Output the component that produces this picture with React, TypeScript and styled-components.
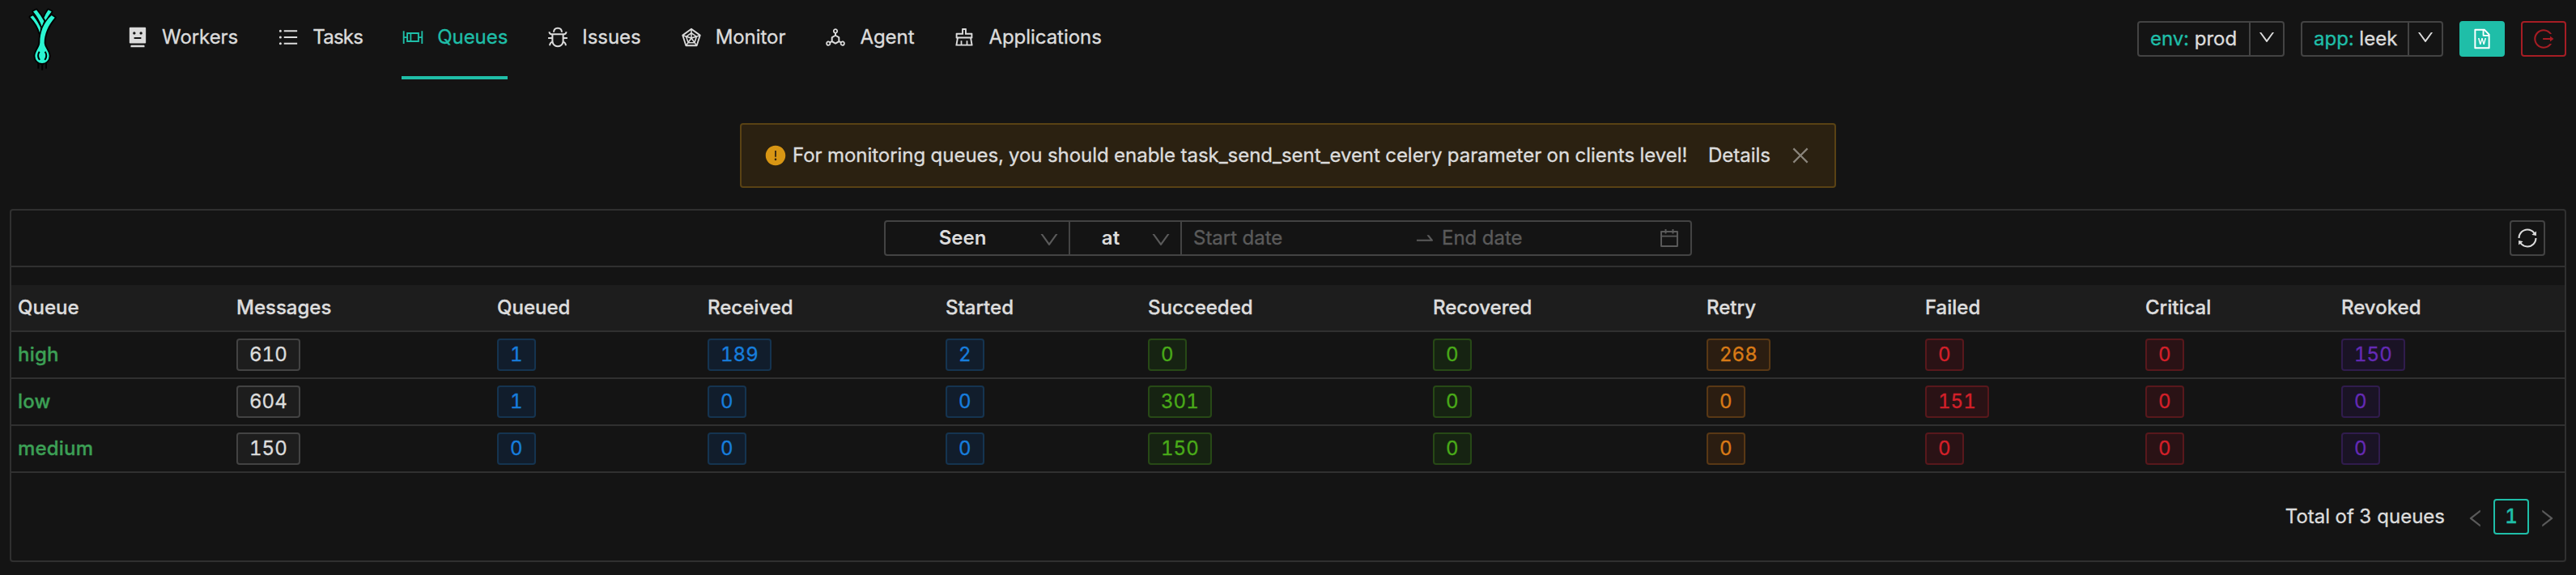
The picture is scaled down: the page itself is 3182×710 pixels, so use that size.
import React from 'react';
import styled, { createGlobalStyle } from 'styled-components';
import {
  AiFillExclamationCircle,
  AiFillRobot,
  AiOutlineBoxPlot,
  AiOutlineBug,
  AiOutlineCalendar,
  AiOutlineClear,
  AiOutlineClose,
  AiOutlineDeploymentUnit,
  AiOutlineDown,
  AiOutlineFileWord,
  AiOutlineLeft,
  AiOutlineLogout,
  AiOutlineRadarChart,
  AiOutlineRight,
  AiOutlineSwapRight,
  AiOutlineSync,
  AiOutlineUnorderedList,
} from 'react-icons/ai';

const color = {
  bg: '#141414',
  text: '#dcdcdc',
  muted: '#5a5a5a',
  primary: '#1fbea8',
  danger: '#a61d24',
  line: '#303030',
  control: '#434343',
  head: '#1d1d1d',
};

const GlobalStyle = createGlobalStyle`
  *, *::before, *::after { box-sizing: border-box; }
  body {
    margin: 0;
    background: ${color.bg};
    color: ${color.text};
    font-family: Inter, 'Liberation Sans', sans-serif;
    font-size: 24px;
    line-height: 38px;
    font-variant-numeric: tabular-nums;
    -webkit-text-stroke: 0.35px currentColor;
  }
  svg { display: block; flex: none; }
`;

const Page = styled.div`
  display: flex;
  flex-direction: column;
  height: 710px;
  padding: 0 12px;
`;

const Header = styled.header`
  display: flex;
  height: 98px;
  flex: none;
`;

const LogoLink = styled.a`
  width: 70px;
  margin: 0 66px 0 8px;
`;

const Nav = styled.nav`
  display: flex;
  gap: 48px;
`;

const NavItem = styled.a<{ $active?: boolean; $tracking?: number }>`
  display: flex;
  align-items: center;
  gap: 16px;
  height: 98px;
  padding-bottom: 2px;
  white-space: nowrap;
  letter-spacing: ${(p) => p.$tracking ?? -0.05}px;
  color: ${(p) => (p.$active ? color.primary : color.text)};
  border-bottom: 4px solid ${(p) => (p.$active ? color.primary : 'transparent')};
`;

const Actions = styled.div`
  display: flex;
  gap: 20px;
  margin: 26px 0 0 auto;
  height: 44px;
`;

const SplitButton = styled.div<{ $width: number }>`
  display: flex;
  width: ${(p) => p.$width}px;
  border: 2px solid ${color.control};
  border-radius: 4px;
`;

const SplitLabel = styled.div`
  flex: 1;
  display: flex;
  align-items: center;
  gap: 7px;
  padding-left: 14px;
  white-space: nowrap;
`;

const LabelKey = styled.span`
  color: ${color.primary};
`;

const SplitToggle = styled.div`
  display: flex;
  align-items: center;
  justify-content: center;
  width: 42px;
  padding-bottom: 4px;
  border-left: 2px solid ${color.control};
`;

const IconButton = styled.button<{ $variant: 'primary' | 'danger' | 'plain' }>`
  display: flex;
  align-items: center;
  justify-content: center;
  width: ${(p) => (p.$variant === 'plain' ? 44 : 56)}px;
  height: 44px;
  padding: 0;
  border-radius: 4px;
  border: 2px solid
    ${(p) => ({ primary: color.primary, danger: color.danger, plain: color.control })[p.$variant]};
  background: ${(p) => (p.$variant === 'primary' ? color.primary : 'transparent')};
  color: ${(p) => ({ primary: '#fff', danger: color.danger, plain: color.text })[p.$variant]};
`;

const Alert = styled.div`
  display: flex;
  align-items: center;
  align-self: center;
  flex: none;
  width: 1354px;
  height: 80px;
  margin: 54px 0 26px;
  padding: 0 28px;
  border: 2px solid #594214;
  border-radius: 4px;
  background: #2b2111;
`;

const AlertIcon = styled.span`
  color: #d89614;
  margin-right: 7px;
`;

const AlertMessage = styled.span`
  flex: 1;
  white-space: nowrap;
  letter-spacing: -0.03px;
`;

const AlertAction = styled.a`
  margin-right: 23px;
`;

const AlertClose = styled.span`
  color: rgba(255, 255, 255, 0.45);
`;

const Panel = styled.main`
  height: 436px;
  flex: none;
  width: 3158px;
  border: 2px solid ${color.line};
  border-radius: 4px;
`;

const Toolbar = styled.div`
  display: grid;
  grid-template-columns: 1fr 998px 1fr;
  align-items: center;
  height: 70px;
  margin-bottom: 22px;
  padding-right: 24px;
  padding-left: 24px;
  border-bottom: 2px solid ${color.line};

  > :last-child { justify-self: end; }
`;

const FilterGroup = styled.div`
  grid-column: 2;
  display: flex;
  height: 44px;
  border: 2px solid ${color.control};
  border-radius: 4px;
`;

const Select = styled.div<{ $width: number }>`
  display: flex;
  align-items: center;
  width: ${(p) => p.$width}px;
  padding-right: 10px;
  border-right: 2px solid ${color.control};
  color: ${color.muted};

  svg { margin: 4px 0 0 -2px; }
`;

const SelectValue = styled.span`
  flex: 1;
  text-align: center;
  font-weight: 600;
  color: ${color.text};
  -webkit-text-stroke: 0;
`;

const RangePicker = styled.div`
  flex: 1;
  display: grid;
  grid-template-columns: 272px 35px 1fr 28px;
  align-items: center;
  padding: 0 12px 0 14px;
  color: ${color.muted};
`;

const Table = styled.table`
  width: 3154px;
  table-layout: fixed;
  border-collapse: separate;
  border-spacing: 0;
`;

const HeadCell = styled.th<{ $width: number }>`
  width: ${(p) => p.$width}px;
  height: 58px;
  padding: 0 8px;
  text-align: left;
  font-weight: 500;
  background: ${color.head};
  border-bottom: 2px solid ${color.line};
`;

const Cell = styled.td`
  height: 58px;
  padding: 0 8px;
  vertical-align: middle;
  border-bottom: 2px solid ${color.line};
`;

const QueueName = styled.div`
  font-weight: 500;
  letter-spacing: 0.2px;
  color: #3c9f55;
`;

type Tone = 'plain' | 'blue' | 'green' | 'orange' | 'red' | 'purple';

const tones: Record<Tone, { fg: string; bg: string; edge: string }> = {
  plain: { fg: color.text, bg: '#1d1d1d', edge: '#434343' },
  blue: { fg: '#177ddc', bg: '#111d2c', edge: '#153450' },
  green: { fg: '#49aa19', bg: '#162312', edge: '#274916' },
  orange: { fg: '#d87a16', bg: '#2b1d11', edge: '#593815' },
  red: { fg: '#d32029', bg: '#2a1215', edge: '#58181c' },
  purple: { fg: '#642ab5', bg: '#1a1325', edge: '#301c4d' },
};

const Tag = styled.div<{ $tone: Tone }>`
  width: fit-content;
  height: 40px;
  line-height: 36px;
  padding: 0 14px;
  border: 2px solid ${(p) => tones[p.$tone].edge};
  border-radius: 4px;
  background: ${(p) => tones[p.$tone].bg};
  color: ${(p) => tones[p.$tone].fg};
`;

const Pagination = styled.div`
  display: flex;
  align-items: center;
  justify-content: flex-end;
  gap: 8px;
  padding-right: 8px;
  margin-top: 32px;
`;

const Total = styled.span`
  margin-right: 16px;
`;

const PageArrow = styled.span`
  padding-top: 4px;
  color: ${color.muted};
`;

const PageNumber = styled.span`
  width: 44px;
  height: 44px;
  line-height: 40px;
  text-align: center;
  font-weight: 500;
  color: ${color.primary};
  border: 2px solid ${color.primary};
  border-radius: 4px;
`;

const leaf = {
  outerLeft: 'M52 63L62 58C74 72 86 92 90 102L88 124Q80 92 52 63z',
  innerLeft: 'M63 43L75 37Q92 58 103 78L95 98Q84 68 63 43z',
  innerRight: 'M119 37L131 43Q118 60 109 76L103 66Q110 50 119 37z',
  stalk:
    'M131 57L143 65C118 95 104 125 104 160C106 178 122 190 122 208a26 26 0 0 1-52 0C70 190 86 178 88 158C88 120 100 85 131 57z',
};

const LeekLogo = () => (
  <svg width="70" height="98" viewBox="0 0 210 294" fill="#2af5d2">
    <path d="M82 228V254M96.500 232V260M111 228V254" stroke="#000" strokeWidth="6" />
    <g stroke="#000" strokeWidth="11" strokeLinejoin="round">
      <path d={leaf.outerLeft} />
      <path d={leaf.innerLeft} />
      <path d={leaf.innerRight} />
      <path d={leaf.stalk} />
    </g>
    <path d={leaf.outerLeft} />
    <path d={leaf.innerLeft} />
    <path d={leaf.innerRight} />
    <path d={leaf.stalk} stroke="#000" strokeWidth="9" />
    <path d={leaf.stalk} />
    <path
      d="M86 191Q76 207 87 222M107 191Q117 207 106 222"
      fill="none" stroke="#000" strokeWidth="6"
    />
  </svg>
);

const navItems = [
  { label: 'Workers', Icon: AiFillRobot },
  { label: 'Tasks', Icon: AiOutlineUnorderedList, tracking: -0.75 },
  { label: 'Queues', Icon: AiOutlineBoxPlot, active: true },
  { label: 'Issues', Icon: AiOutlineBug },
  { label: 'Monitor', Icon: AiOutlineRadarChart },
  { label: 'Agent', Icon: AiOutlineDeploymentUnit },
  { label: 'Applications', Icon: AiOutlineClear },
];

const columns: { title: string; width: number; tone?: Tone }[] = [
  { title: 'Queue', width: 270 },
  { title: 'Messages', width: 322, tone: 'plain' },
  { title: 'Queued', width: 260, tone: 'blue' },
  { title: 'Received', width: 294, tone: 'blue' },
  { title: 'Started', width: 250, tone: 'blue' },
  { title: 'Succeeded', width: 352, tone: 'green' },
  { title: 'Recovered', width: 338, tone: 'green' },
  { title: 'Retry', width: 270, tone: 'orange' },
  { title: 'Failed', width: 272, tone: 'red' },
  { title: 'Critical', width: 242, tone: 'red' },
  { title: 'Revoked', width: 284, tone: 'purple' },
];

const queues = [
  { name: 'high', counts: [610, 1, 189, 2, 0, 0, 268, 0, 0, 150] },
  { name: 'low', counts: [604, 1, 0, 0, 301, 0, 0, 151, 0, 0] },
  { name: 'medium', counts: [150, 0, 0, 0, 150, 0, 0, 0, 0, 0] },
];

const Switcher = ({ name, value, width }: { name: string; value: string; width: number }) => (
  <SplitButton $width={width}>
    <SplitLabel>
      <LabelKey>{name}:</LabelKey>
      <span>{value}</span>
    </SplitLabel>
    <SplitToggle>
      <AiOutlineDown size={24} />
    </SplitToggle>
  </SplitButton>
);

export default function App() {
  return (
    <>
      <GlobalStyle />
      <Page>
        <Header>
          <LogoLink>
            <LeekLogo />
          </LogoLink>
          <Nav>
            {navItems.map(({ label, Icon, active, tracking }) => (
              <NavItem key={label} $active={active} $tracking={tracking}>
                <Icon size={28} />
                {label}
              </NavItem>
            ))}
          </Nav>
          <Actions>
            <Switcher name="env" value="prod" width={182} />
            <Switcher name="app" value="leek" width={176} />
            <IconButton $variant="primary">
              <AiOutlineFileWord size={28} />
            </IconButton>
            <IconButton $variant="danger">
              <AiOutlineLogout size={28} />
            </IconButton>
          </Actions>
        </Header>

        <Alert>
          <AlertIcon>
            <AiFillExclamationCircle size={28} />
          </AlertIcon>
          <AlertMessage>
            For monitoring queues, you should enable task_send_sent_event celery parameter on clients level!
          </AlertMessage>
          <AlertAction>Details</AlertAction>
          <AlertClose>
            <AiOutlineClose size={28} />
          </AlertClose>
        </Alert>

        <Panel>
          <Toolbar>
            <FilterGroup>
              <Select $width={228}>
                <SelectValue>Seen</SelectValue>
                <AiOutlineDown size={28} />
              </Select>
              <Select $width={138}>
                <SelectValue>at</SelectValue>
                <AiOutlineDown size={28} />
              </Select>
              <RangePicker>
                <span>Start date</span>
                <AiOutlineSwapRight size={28} />
                <span>End date</span>
                <AiOutlineCalendar size={28} />
              </RangePicker>
            </FilterGroup>
            <IconButton $variant="plain">
              <AiOutlineSync size={28} />
            </IconButton>
          </Toolbar>

          <Table>
            <thead>
              <tr>
                {columns.map((c) => (
                  <HeadCell key={c.title} $width={c.width}>
                    {c.title}
                  </HeadCell>
                ))}
              </tr>
            </thead>
            <tbody>
              {queues.map((q) => (
                <tr key={q.name}>
                  <Cell>
                    <QueueName>{q.name}</QueueName>
                  </Cell>
                  {q.counts.map((count, i) => (
                    <Cell key={columns[i + 1].title}>
                      <Tag $tone={columns[i + 1].tone ?? 'plain'}>{count}</Tag>
                    </Cell>
                  ))}
                </tr>
              ))}
            </tbody>
          </Table>

          <Pagination>
            <Total>Total of 3 queues</Total>
            <PageArrow>
              <AiOutlineLeft size={28} />
            </PageArrow>
            <PageNumber>1</PageNumber>
            <PageArrow>
              <AiOutlineRight size={28} />
            </PageArrow>
          </Pagination>
        </Panel>
      </Page>
    </>
  );
}
